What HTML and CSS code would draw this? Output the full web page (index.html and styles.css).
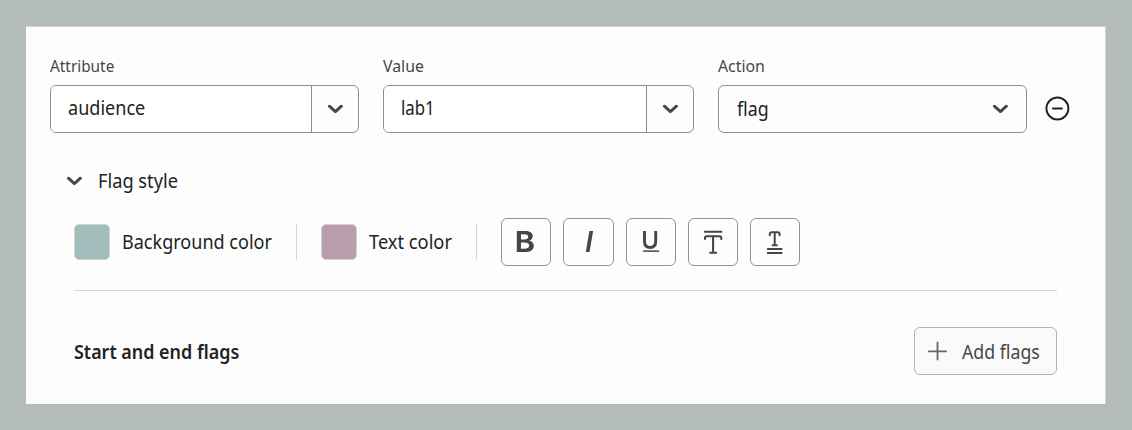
FILE: index.html
```html
<!DOCTYPE html>
<html lang="en">
<head>
<meta charset="utf-8">
<title>Flag style</title>
<link rel="stylesheet" href="styles.css">
</head>
<body>
<svg class="defs" aria-hidden="true"><symbol id="chevron" viewBox="0 0 16 10"><path d="M2.4 2.2 8.4 7.6 14.4 2.2" fill="none" stroke="currentColor" stroke-width="2.9" stroke-linecap="round" stroke-linejoin="round"/></symbol></svg>
<main class="card">
  <section class="fields">
    <div class="field attribute">
      <label><span class="t t-attribute">Attribute</span></label>
      <div class="control"><div class="input"><span class="t t-audience">audience</span></div><button class="picker"><svg class="chevron"><use href="#chevron"/></svg></button></div>
    </div>
    <div class="field value">
      <label><span class="t t-value">Value</span></label>
      <div class="control"><div class="input"><span class="t t-lab">lab1</span></div><button class="picker"><svg class="chevron"><use href="#chevron"/></svg></button></div>
    </div>
    <div class="field action">
      <label><span class="t t-action">Action</span></label>
      <div class="control select"><span class="t t-flag">flag</span><svg class="chevron"><use href="#chevron"/></svg></div>
    </div>
    <button class="remove" aria-label="Remove"><svg width="26" height="26" viewBox="0 0 26 26" fill="none" stroke="#222" stroke-width="1.9" stroke-linecap="round"><circle cx="13.4" cy="13.5" r="11"/><path d="M8.9 13.5h9"/></svg></button>
  </section>
  <div class="disclosure"><svg class="chevron"><use href="#chevron"/></svg><span class="t t-style">Flag style</span></div>
  <section class="toolbar">
    <span class="swatch teal"></span><span class="t t-bg">Background color</span>
    <span class="divider after-bg"></span>
    <span class="swatch mauve"></span><span class="t t-text">Text color</span>
    <span class="divider after-text"></span>
    <div class="buttons">
      <button class="tool" aria-label="Bold"><svg viewBox="0 0 48 46"><path d="M14.8 12h7.7c5.5 0 8.2 1.7 8.2 5.1 0 2.3-1.2 3.9-3.6 4.6 3.1.5 4.7 2.3 4.7 5 0 4.2-3.2 6.3-9.1 6.3h-7.9ZM19 15.3v5.1h3.1c2.8 0 4.1-.9 4.1-2.6s-1.3-2.5-4.1-2.5Zm0 8.2v6.2h3.5c3.1 0 4.7-1 4.7-3.1s-1.6-3.1-4.8-3.1Z" fill="currentColor" fill-rule="evenodd" stroke="none"/></svg></button>
      <button class="tool wide" aria-label="Italic"><svg viewBox="0 0 48 46"><path d="M24.4 12h3.7l-3.6 21h-3.7Z" fill="currentColor" stroke="none"/></svg></button>
      <button class="tool" aria-label="Underline"><svg viewBox="0 0 48 46"><path d="M17.5 12v10.6c0 4.3 2 5.9 5.6 5.9s5.6-1.7 5.6-5.9V12" stroke-width="2.9"/><path d="M16 32.1h16.2" stroke-width="1.5"/></svg></button>
      <button class="tool" aria-label="Line above"><svg viewBox="0 0 48 46" stroke-linecap="round"><path d="M15.8 12.7h16.6M16 20v-1q0-1.8 1.7-1.8h12.9q1.7 0 1.7 1.8v1M24.1 17v16.8M21.2 33.8h6" stroke-width="2.1"/></svg></button>
      <button class="tool" aria-label="Double underline"><svg viewBox="0 0 48 46" stroke-linecap="round"><path d="M18.8 16.3v-1q0-2 1.8-2h6.2q1.8 0 1.8 2v1M23.7 13.5v12.6M21.6 26.2h4.3M16.8 29.9h13.8M16.8 33.9h13.8" stroke-width="2"/></svg></button>
    </div>
  </section>
  <section class="footer">
    <h2><span class="t t-start">Start and end flags</span></h2>
    <button class="add"><svg width="20" height="20" viewBox="0 0 20 20"><path d="M9.5 1.4v17.2M.9 10.4h17.2" stroke="#666" stroke-width="1.8" stroke-linecap="round"/></svg><span class="t t-add">Add flags</span></button>
  </section>
</main>
</body>
</html>
```
FILE: styles.css
```css
* { box-sizing: border-box; }
body { margin: 0; padding: 26px; height: 430px; background: #b3bcbb; color: #222; font-family: "Noto Sans", sans-serif; font-size: 19.5px; line-height: 24px; }
.defs { position: absolute; width: 0; height: 0; }
button { margin: 0; padding: 0; border: 0; background: none; color: #464646; font: inherit; display: flex; align-items: center; justify-content: center; }
.card { width: 1080px; height: 378px; padding: 28px 24px 0; background: #fdfdfd; border-top: 1px solid #d2d4d3; border-right: 1px solid #d2d4d3; }
.t { display: inline-block; white-space: nowrap; transform-origin: left center; }
.fields { display: flex; align-items: flex-end; height: 78px; }
.field { display: flex; flex-direction: column; gap: 7px; margin-right: 24px; }
.attribute { width: 309px; }
.value { width: 311px; }
.action { width: 309px; margin-right: 17px; }
label { height: 24px; font-size: 16.5px; color: #464646; }
.control { height: 48px; display: flex; border: 1px solid #8f8f8f; border-radius: 6px; overflow: hidden; }
.input { flex: 1; background: #fff; padding: 10px 0 0 17px; border-right: 1px solid #8f8f8f; }
.picker { width: 46px; }
.select { justify-content: space-between; align-items: center; padding: 0 18px; }
.chevron { width: 16px; height: 10px; color: #464646; }
.remove { width: 26px; height: 26px; margin-bottom: 12px; }
.disclosure { display: flex; align-items: center; gap: 16px; height: 24px; margin: 36px 0 0 16px; }
.toolbar { display: flex; align-items: center; width: 983px; height: 98px; margin-left: 24px; border-bottom: 1px solid #d4d4d4; }
.swatch { width: 36px; height: 36px; margin-right: 12px; border: 1px solid #d0d0d0; border-radius: 5px; }
.teal { background: #a3bdbd; }
.mauve { background: #b99dab; }
.divider { width: 1px; height: 36px; background: #d4d4d4; margin-right: 24px; }
.buttons { display: flex; gap: 12px; }
.tool { width: 50px; height: 48px; border: 1px solid #929292; border-radius: 6px; }
.wide { width: 51px; }
.tool svg { width: 48px; height: 46px; fill: none; stroke: currentColor; }
.footer { display: flex; align-items: center; justify-content: space-between; width: 983px; margin: 36px 0 0 24px; }
h2 { margin: 2px 0 0; font-size: 19.5px; line-height: 24px; font-weight: 600; }
.add { width: 143px; height: 48px; justify-content: flex-start; gap: 14px; padding-left: 13px; background: #fafafa; border: 1px solid #b2b2b2; border-radius: 6px; }
.t-attribute { transform: scaleX(.93); }
.t-value { transform: scaleX(.96); }
.t-action { transform: scaleX(.96); }
.t-audience { transform: scaleX(.926); }
.t-lab { transform: scaleX(.86); }
.t-flag { transform: scaleX(.91); }
.t-style { transform: scaleX(.935); }
.t-bg { width: 174px; transform: scaleX(.925); }
.t-text { width: 107px; transform: scaleX(.937); }
.t-start { transform: scaleX(.919); }
.t-add { transform: scaleX(.91); padding-top: 2px; }
```
